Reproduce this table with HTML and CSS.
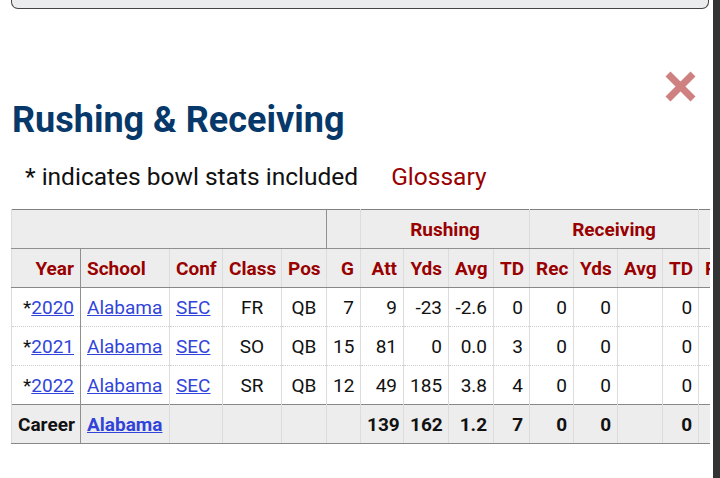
FILE: index.html
```html
<!DOCTYPE html>
<html lang="en">
<head>
    <meta charset="UTF-8">
    <title>Rushing &amp; Receiving</title>
    <link rel="stylesheet" href="styles.css">
</head>
<body>
    <div class="page">
        <div class="main">
            <div class="top-box"></div>

            <div class="close-row">
                <button class="close-button" aria-label="Close">
                    <svg width="33" height="33" viewBox="0 0 33 33">
                        <path d="M4 4 L29 29 M29 4 L4 29" stroke="#cf8080" stroke-width="7" fill="none"/>
                    </svg>
                </button>
            </div>

            <h2 class="section-title">Rushing &amp; Receiving</h2>
            <p class="note">
                <span>* indicates bowl stats included</span>
                <a class="glossary" href="#">Glossary</a>
            </p>

            <div class="table-wrap">
                <table class="stats">
                    <colgroup>
                        <col style="width:69px"><col style="width:89px"><col style="width:53px">
                        <col style="width:59px"><col style="width:45px"><col style="width:34px">
                        <col style="width:43px"><col style="width:45px"><col style="width:45px">
                        <col style="width:36px"><col style="width:44px"><col style="width:44px">
                        <col style="width:45px"><col style="width:36px"><col style="width:56px">
                    </colgroup>
                    <thead>
                        <tr class="over-header">
                            <th colspan="5" class="divider"></th>
                            <th></th>
                            <th colspan="4">Rushing</th>
                            <th colspan="4">Receiving</th>
                            <th></th>
                        </tr>
                        <tr class="col-header">
                            <th class="right divider">Year</th>
                            <th class="left">School</th>
                            <th class="left">Conf</th>
                            <th>Class</th>
                            <th>Pos</th>
                            <th class="right">G</th>
                            <th class="right">Att</th>
                            <th class="right">Yds</th>
                            <th class="right">Avg</th>
                            <th class="right">TD</th>
                            <th class="right">Rec</th>
                            <th class="right">Yds</th>
                            <th class="right">Avg</th>
                            <th class="right">TD</th>
                            <th class="left">Plays</th>
                        </tr>
                    </thead>
                    <tbody>
                        <tr>
                            <td class="right divider">*<a href="#">2020</a></td>
                            <td class="left"><a href="#">Alabama</a></td>
                            <td class="left"><a href="#">SEC</a></td>
                            <td>FR</td><td>QB</td>
                            <td class="right">7</td><td class="right">9</td><td class="right">-23</td><td class="right">-2.6</td><td class="right">0</td>
                            <td class="right">0</td><td class="right">0</td><td class="right"></td><td class="right">0</td>
                            <td></td>
                        </tr>
                        <tr>
                            <td class="right divider">*<a href="#">2021</a></td>
                            <td class="left"><a href="#">Alabama</a></td>
                            <td class="left"><a href="#">SEC</a></td>
                            <td>SO</td><td>QB</td>
                            <td class="right">15</td><td class="right">81</td><td class="right">0</td><td class="right">0.0</td><td class="right">3</td>
                            <td class="right">0</td><td class="right">0</td><td class="right"></td><td class="right">0</td>
                            <td></td>
                        </tr>
                        <tr>
                            <td class="right divider">*<a href="#">2022</a></td>
                            <td class="left"><a href="#">Alabama</a></td>
                            <td class="left"><a href="#">SEC</a></td>
                            <td>SR</td><td>QB</td>
                            <td class="right">12</td><td class="right">49</td><td class="right">185</td><td class="right">3.8</td><td class="right">4</td>
                            <td class="right">0</td><td class="right">0</td><td class="right"></td><td class="right">0</td>
                            <td></td>
                        </tr>
                    </tbody>
                    <tfoot>
                        <tr>
                            <td class="right divider">Career</td>
                            <td class="left"><a href="#">Alabama</a></td>
                            <td></td><td></td><td></td><td></td>
                            <td class="right">139</td><td class="right">162</td><td class="right">1.2</td><td class="right">7</td>
                            <td class="right">0</td><td class="right">0</td><td class="right"></td><td class="right">0</td>
                            <td></td>
                        </tr>
                    </tfoot>
                </table>
            </div>
        </div>
        <div class="rail"></div>
    </div>
</body>
</html>
```

FILE: styles.css
```css
body {
    margin: 0;
    font-family: Roboto, "Liberation Sans", sans-serif;
    color: #111;
    background-color: #fff;
}
.page {
    display: flex;
    height: 478px;
    overflow: hidden;
}
.main {
    flex: 1;
    padding: 0 3px 0 11px;
    min-width: 0;
}
.rail {
    width: 7px;
    background-color: #333;
}
.top-box {
    height: 8px;
    margin-right: 1px;
    background-color: #ebecee;
    border: 1px solid #444;
    border-top: none;
    border-radius: 0 0 7px 7px;
}
.close-row {
    display: flex;
    justify-content: flex-end;
    padding-right: 13px;
    margin-top: 61px;
}
.close-button {
    background: none;
    border: none;
    padding: 0;
    width: 33px;
    height: 33px;
    cursor: pointer;
}
.close-button svg {
    display: block;
}
.section-title {
    margin: -3px 0 0 1px;
    font-size: 36px;
    line-height: 41px;
    font-weight: 700;
    color: #07386a;
}
.note {
    margin: 23px 0 0 14px;
    font-size: 24.5px;
    line-height: 26px;
    color: #111;
}
.glossary {
    margin-left: 27px;
    color: #990000;
    text-decoration: none;
}
.table-wrap {
    margin-top: 19px;
    width: 699px;
    overflow: hidden;
}
.stats {
    border-collapse: collapse;
    table-layout: fixed;
    width: 700px;
    font-size: 19px;
    border-top: 1px solid #808080;
    border-left: 1px solid #808080;
}
.stats th,
.stats td {
    height: 38px;
    padding: 0 6px;
    border-left: 1px solid #dcdcdc;
    text-align: center;
    white-space: nowrap;
    overflow: hidden;
}
.stats th {
    background-color: #ededed;
    color: #990000;
    font-weight: 700;
}
.over-header th {
    border-bottom: 1px solid #909090;
}
.over-header th.divider {
    border-right: 1px solid #909090;
}
.col-header th {
    border-bottom: 1px solid #888;
}
.stats .divider {
    border-right: 1px solid #909090;
}
.stats .left {
    text-align: left;
}
.stats .right {
    text-align: right;
}
.stats tbody td {
    border-bottom: 1px dotted #ccc;
}
.stats tbody tr:last-child td {
    border-bottom: none;
}
.stats a {
    color: #3144da;
}
.stats tfoot td {
    background-color: #ededed;
    font-weight: 700;
    border-top: 1px solid #888;
    border-bottom: 1px solid #888;
}
```
